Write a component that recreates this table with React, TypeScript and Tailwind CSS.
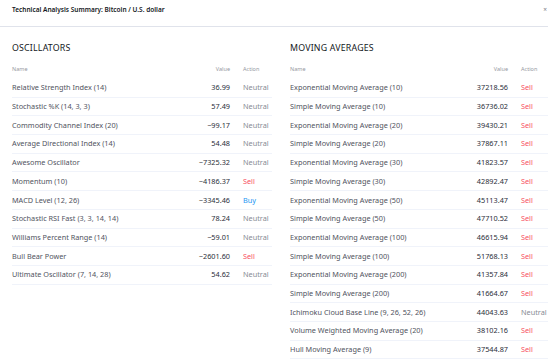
const oscillators = [
  { name: "Relative Strength Index (14)", value: "36.99", action: "Neutral" },
  { name: "Stochastic %K (14, 3, 3)", value: "57.49", action: "Neutral" },
  { name: "Commodity Channel Index (20)", value: "−99.17", action: "Neutral" },
  { name: "Average Directional Index (14)", value: "54.48", action: "Neutral" },
  { name: "Awesome Oscillator", value: "−7325.32", action: "Neutral" },
  { name: "Momentum (10)", value: "−4186.37", action: "Sell" },
  { name: "MACD Level (12, 26)", value: "−3345.46", action: "Buy" },
  { name: "Stochastic RSI Fast (3, 3, 14, 14)", value: "78.24", action: "Neutral" },
  { name: "Williams Percent Range (14)", value: "−59.01", action: "Neutral" },
  { name: "Bull Bear Power", value: "−2601.60", action: "Sell" },
  { name: "Ultimate Oscillator (7, 14, 28)", value: "54.62", action: "Neutral" },
];

const movingAverages = [
  { name: "Exponential Moving Average (10)", value: "37218.56", action: "Sell" },
  { name: "Simple Moving Average (10)", value: "36736.02", action: "Sell" },
  { name: "Exponential Moving Average (20)", value: "39430.21", action: "Sell" },
  { name: "Simple Moving Average (20)", value: "37867.11", action: "Sell" },
  { name: "Exponential Moving Average (30)", value: "41823.57", action: "Sell" },
  { name: "Simple Moving Average (30)", value: "42892.47", action: "Sell" },
  { name: "Exponential Moving Average (50)", value: "45113.47", action: "Sell" },
  { name: "Simple Moving Average (50)", value: "47710.52", action: "Sell" },
  { name: "Exponential Moving Average (100)", value: "46615.94", action: "Sell" },
  { name: "Simple Moving Average (100)", value: "51768.13", action: "Sell" },
  { name: "Exponential Moving Average (200)", value: "41357.84", action: "Sell" },
  { name: "Simple Moving Average (200)", value: "41664.67", action: "Sell" },
  { name: "Ichimoku Cloud Base Line (9, 26, 52, 26)", value: "44043.63", action: "Neutral" },
  { name: "Volume Weighted Moving Average (20)", value: "38102.16", action: "Sell" },
  { name: "Hull Moving Average (9)", value: "37544.87", action: "Sell" },
];

interface Row {
  name: string;
  value: string;
  action: string;
}

function actionColor(action: string) {
  if (action === "Sell") return "text-[#f7525f]";
  if (action === "Buy") return "text-[#2196f3]";
  return "text-[#878b94]";
}

function Table({ title, rows }: { title: string; rows: Row[] }) {
  return (
    <div className="w-[260px] shrink-0">
      <h2 className="text-[8.8px] leading-[14px] text-[#131722] tracking-[0.2px]">{title}</h2>
      <div className="flex items-center h-[14px] mt-[7px] mb-[3px] text-[5.5px] text-[#9598a1]">
        <span className="flex-1">Name</span>
        <span className="w-[60px] text-right">Value</span>
        <span className="w-[42px] pl-[13px]">Action</span>
      </div>
      {rows.map((row) => (
        <div
          key={row.name}
          className="flex items-center h-[18.7px] border-b border-[#f0f3fa] text-[7.3px] text-[#50535e]"
        >
          <span className="flex-1 whitespace-nowrap">{row.name}</span>
          <span className="w-[60px] text-right text-[#2a2e39]">{row.value}</span>
          <span className={"w-[42px] pl-[13px] " + actionColor(row.action)}>{row.action}</span>
        </div>
      ))}
    </div>
  );
}

export default function App() {
  return (
    <div
      className="w-[548px] h-[363px] overflow-hidden bg-white"
      style={{ fontFamily: '"Noto Sans", "Open Sans", sans-serif' }}
    >
      <div className="h-[27px] border-b border-[#e0e3eb] flex items-center justify-between pl-[12px]">
        <span className="text-[6.5px] font-semibold text-[#131722] -mt-[6px]">
          Technical Analysis Summary: Bitcoin / U.S. dollar
        </span>
        <span className="text-[6.5px] text-[#787b86] -mt-[6px] pr-[1px]">×</span>
      </div>
      <div className="flex gap-[18px] pl-[12px] pt-[14px]">
        <Table title="OSCILLATORS" rows={oscillators} />
        <Table title="MOVING AVERAGES" rows={movingAverages} />
      </div>
    </div>
  );
}
